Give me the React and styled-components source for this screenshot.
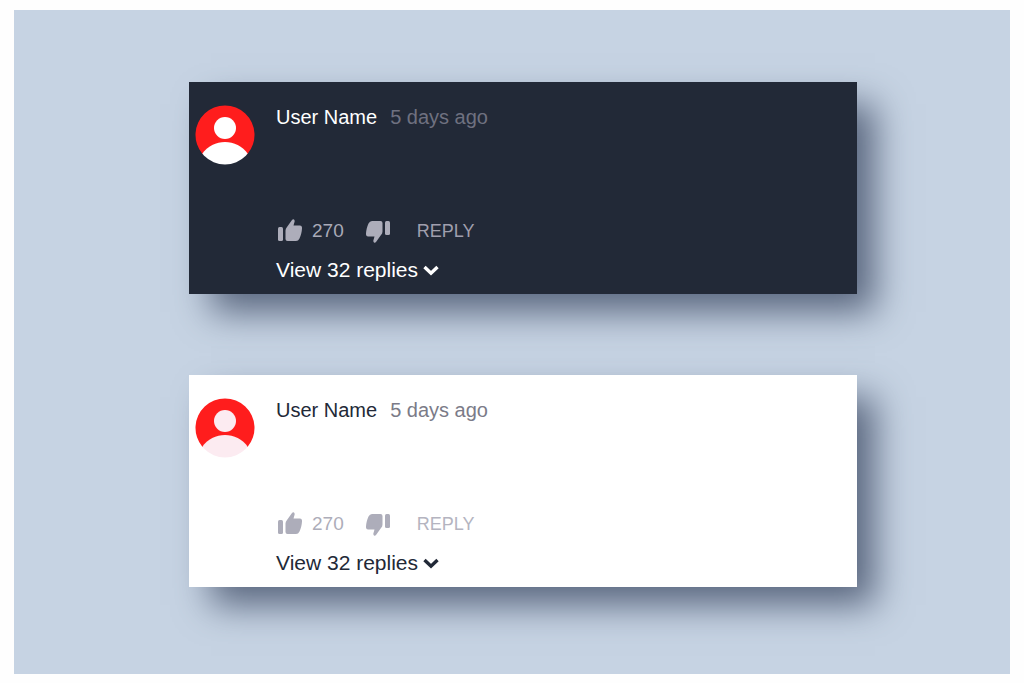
import React from "react";
import styled, { createGlobalStyle, ThemeProvider } from "styled-components";

const darkTheme = {
	background: "#222937",
	text: "#ffffff",
	time: "#6f7180",
	count: "#a9aab7",
	reply: "#a09fad",
	figure: "#ffffff",
};

const lightTheme = {
	background: "#ffffff",
	text: "#222937",
	time: "#7b7b88",
	count: "#adadb9",
	reply: "#b4b4c0",
	figure: "#fcebf1",
};

const GlobalStyle = createGlobalStyle`
	* {
		box-sizing: border-box;
	}

	body {
		margin: 0;
		background: #fefefe;
		font-family: "Liberation Sans", Arial, sans-serif;
	}
`;

const Page = styled.main`
	display: flex;
	min-height: 100vh;
	padding: 10px 14px 9px;
`;

const Board = styled.div`
	flex: 1;
	display: flex;
	flex-direction: column;
	gap: 81px;
	padding: 72px 153px 72px 175px;
	background: #c6d3e3;
`;

const Card = styled.article`
	display: flex;
	gap: 21px;
	padding: 23px 6px 12px;
	background: ${({ theme }) => theme.background};
	box-shadow: 20px 20px 34px -2px #5a677f;
`;

const AvatarIcon = styled.svg`
	flex: none;
	width: 60px;
	height: 60px;
`;

const Content = styled.div`
	display: flex;
	flex-direction: column;
	align-items: flex-start;
`;

const Header = styled.header`
	display: flex;
	gap: 13px;
	font-size: 20px;
	line-height: 24px;
`;

const UserName = styled.span`
	color: ${({ theme }) => theme.text};
`;

const Time = styled.time`
	color: ${({ theme }) => theme.time};
`;

const Actions = styled.div`
	display: flex;
	align-items: center;
	margin-top: 88px;
	height: 28px;
`;

const Button = styled.button`
	display: flex;
	align-items: center;
	padding: 0;
	border: 0;
	background: none;
	font-family: inherit;
	cursor: pointer;
`;

const VoteButton = styled(Button)`
	gap: 10px;
	padding-left: 2px;
	font-size: 19px;
	color: ${({ theme }) => theme.count};
`;

const DislikeButton = styled(VoteButton)`
	margin: 0 27px 0 20px;
`;

const ReplyButton = styled(Button)`
	font-size: 18px;
	color: ${({ theme }) => theme.reply};
`;

const RepliesButton = styled(Button)`
	gap: 5px;
	margin-top: 13px;
	font-size: 21px;
	line-height: 24px;
	color: ${({ theme }) => theme.text};
`;

const ThumbIcon = styled.svg`
	width: 24px;
	height: 24px;
	fill: #adadba;
	transform: ${({ $down }) => ($down ? "rotate(180deg)" : "none")};
`;

const ChevronIcon = styled.svg`
	width: 16px;
	height: 12px;
	fill: none;
	stroke: currentColor;
	stroke-width: 3.4;
`;

function Avatar({ figure }) {
	return (
		<AvatarIcon viewBox="0 0 60 60" aria-hidden="true">
			<clipPath id="avatar-circle">
				<circle cx="30" cy="30" r="29.5" />
			</clipPath>
			<path d="M7.500 49A29.500 29.500 0 1 1 52.500 49Z" fill="#ff1d1d" />
			<circle cx="30" cy="23" r="11" fill={figure} />
			<path
				d="M7 49C18 33 42 33 53 49V60H7Z"
				fill={figure}
				clipPath="url(#avatar-circle)"
			/>
		</AvatarIcon>
	);
}

function Thumb({ down }) {
	return (
		<ThumbIcon $down={down} viewBox="0 0 24 24" aria-hidden="true">
			<rect x="0" y="8" width="5" height="14" rx="1.5" />
			<path d="M7.500 11.500Q7.500 9.500 9 8L14 1Q15 -.3 16 .5Q17 1.300 16.500 3L15.500 6.500H22Q24.200 6.500 24 9.500C23.800 13 23 16 21.500 19.500Q20.300 22 18 22H9.500Q7.500 22 7.500 20Z" />
		</ThumbIcon>
	);
}

function Comment({ theme }) {
	return (
		<ThemeProvider theme={theme}>
			<Card>
				<Avatar figure={theme.figure} />
				<Content>
					<Header>
						<UserName>User Name</UserName>
						<Time>5 days ago</Time>
					</Header>
					<Actions>
						<VoteButton type="button" aria-label="Like, 270">
							<Thumb />
							<span>270</span>
						</VoteButton>
						<DislikeButton type="button" aria-label="Dislike">
							<Thumb down />
						</DislikeButton>
						<ReplyButton type="button">REPLY</ReplyButton>
					</Actions>
					<RepliesButton type="button">
						<span>View 32 replies</span>
						<ChevronIcon viewBox="0 0 16 12" aria-hidden="true">
							<path d="M1.500 3L8 9.200L14.500 3" />
						</ChevronIcon>
					</RepliesButton>
				</Content>
			</Card>
		</ThemeProvider>
	);
}

export default function App() {
	return (
		<>
			<GlobalStyle />
			<Page>
				<Board>
					<Comment theme={darkTheme} />
					<Comment theme={lightTheme} />
				</Board>
			</Page>
		</>
	);
}
